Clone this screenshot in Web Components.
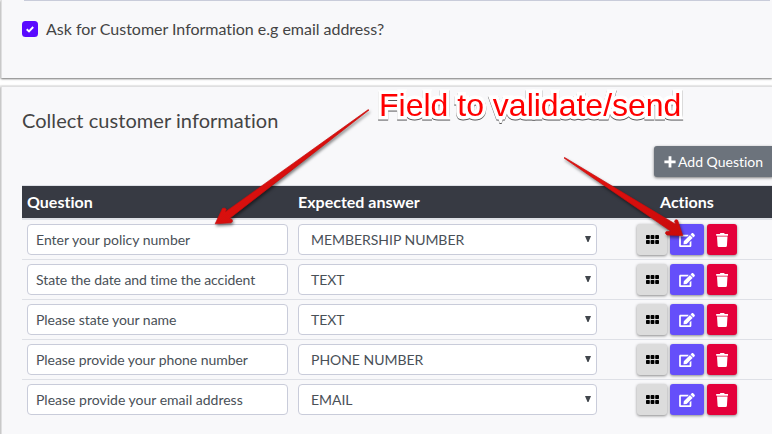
<!DOCTYPE html>
<html lang="en">
<head>
<meta charset="utf-8">
<title>Collect customer information</title>
<style>
html,body{margin:0;height:100%;overflow:hidden;background:#fff}
body{font-family:Lato,"Open Sans",sans-serif;font-size:16px;line-height:24px;color:#444;position:relative;font-variant-ligatures:none}
</style>
</head>
<body>
<survey-page></survey-page>
<script>
const define = (name, html, setup) => customElements.define(name, class extends HTMLElement {
  connectedCallback() {
    if (this.shadowRoot) return;
    const t = document.createElement('template');
    t.innerHTML = html;
    this.attachShadow({mode: 'open'}).append(t.content.cloneNode(true));
    if (setup) setup(this, this.shadowRoot);
  }
});

define('panel-card', `<style>
:host{display:block;flex:none;box-sizing:border-box;background:#f8f8fa;border:1px solid #dfdfe0;border-width:1px 0 0 1px;box-shadow:0 1px 2px rgba(0,0,0,.5),0 0 1px 1px rgba(0,0,0,.06);margin-left:1px;padding-left:20px}
</style><slot></slot>`);

define('check-option', `<style>
:host{display:flex;align-items:center;gap:8px;letter-spacing:-.02px}
svg{display:block;flex:none}
</style><svg width="16" height="16" viewBox="0 0 16 16"><rect width="16" height="16" rx="3.5" fill="#5a0aff"/><path d="M4.700 8.200 7 10.400 11.200 6" fill="none" stroke="#fff" stroke-width="1.900"/></svg><span><slot></slot></span>`);

define('add-button', `<style>
:host{display:flex;flex:none;align-items:center;box-sizing:border-box;width:120px;height:31px;padding-left:10px;gap:2px;background:#6c737c;color:#fff;border-radius:3px;font-size:14px;line-height:21px;white-space:nowrap;box-shadow:0 1px 3px rgba(0,0,0,.5)}
svg{display:block;flex:none}
</style><svg width="12" height="14" viewBox="0 0 12 14"><path d="M6 1.300v11.200M.4 6.900h11.200" stroke="#fff" stroke-width="2.800"/></svg><span><slot></slot></span>`);

define('text-field', `<style>
:host{display:flex;align-items:center;box-sizing:border-box;height:31px;border:1px solid #c9ccda;border-radius:4px;background:#fff;padding:0 8px;font-size:14px;line-height:21px;color:#495057;white-space:nowrap}
</style><span><slot></slot></span>`);

define('select-field', `<style>
:host{display:flex;align-items:center;justify-content:space-between;box-sizing:border-box;height:31px;border:1px solid #c9ccda;border-radius:4px;background:#fff;padding:0 5px 0 12px;font-size:14px;line-height:21px;color:#495057;white-space:nowrap;letter-spacing:-.03px}
svg{display:block;margin-bottom:2px}
</style><span><slot></slot></span><svg width="6" height="6" viewBox="0 0 6 6"><path d="M0 0h6L3.500 6h-1z" fill="#41464c"/></svg>`);

const icons = {
  grid: '<svg width="13" height="9" viewBox="0 0 13 9"><g fill="#000"><rect width="3.800" height="4" rx=".8"/><rect x="4.600" width="3.800" height="4" rx=".8"/><rect x="9.200" width="3.800" height="4" rx=".8"/><rect y="5" width="3.800" height="4" rx=".8"/><rect x="4.600" y="5" width="3.800" height="4" rx=".8"/><rect x="9.200" y="5" width="3.800" height="4" rx=".8"/></g></svg>',
  edit: '<svg width="16" height="14" viewBox="0 0 576 512"><path fill="#fff" d="M402.600 83.200l90.200 90.200c3.800 3.800 3.800 10 0 13.800L274.400 405.600l-92.800 10.300c-12.400 1.400-22.900-9.100-21.500-21.500l10.300-92.800L388.800 83.200c3.800-3.800 10-3.800 13.800 0zm162-22.900l-48.800-48.800c-15.200-15.200-39.900-15.200-55.200 0l-35.400 35.400c-3.800 3.800-3.800 10 0 13.800l90.200 90.200c3.800 3.800 10 3.800 13.800 0l35.400-35.400c15.200-15.300 15.200-40 0-55.200zM384 346.200V448H64V128h229.800c3.200 0 6.200-1.300 8.500-3.500l40-40c7.600-7.600 2.200-20.500-8.500-20.500H48C21.500 64 0 85.500 0 112v352c0 26.500 21.500 48 48 48h352c26.500 0 48-21.500 48-48V306.200c0-10.700-12.900-16-20.500-8.500l-40 40c-2.200 2.300-3.500 5.300-3.500 8.500z"/></svg>',
  trash: '<svg width="12.500" height="14" viewBox="0 0 448 512"><path fill="#fff" d="M432 32H312l-9.400-18.700A24 24 0 0 0 281.100 0H166.800a23.700 23.700 0 0 0-21.400 13.300L136 32H16A16 16 0 0 0 0 48v32a16 16 0 0 0 16 16h416a16 16 0 0 0 16-16V48a16 16 0 0 0-16-16zM53.200 467a48 48 0 0 0 47.900 45h245.800a48 48 0 0 0 47.900-45L416 128H32z"/></svg>'
};
define('icon-button', `<style>
:host{display:flex;flex:none;align-items:center;justify-content:center;box-sizing:border-box;height:31px;border-radius:3px;box-shadow:0 1px 3px rgba(0,0,0,.45)}
:host([kind=grid]){width:30px;background:#dcdcdc}
:host([kind=edit]){width:34px;background:#654ffa}
:host([kind=trash]){width:30px;background:#e4003a}
svg{display:block}
</style>`, (el, root) => root.append(Object.assign(document.createElement('template'), {innerHTML: icons[el.getAttribute('kind')]}).content));

define('question-row', `<style>
:host{display:grid;grid-template-columns:261px 299px 1fr;column-gap:10px;box-sizing:border-box;height:40px;border-top:1px solid #dee0e6;padding:4px 0 0 5px}
.actions{display:flex;gap:3px;margin-left:30px}
</style><text-field><slot></slot></text-field><select-field><slot name="answer"></slot></select-field>
<div class="actions"><icon-button kind="grid"></icon-button><icon-button kind="edit"></icon-button><icon-button kind="trash"></icon-button></div>`);

define('question-table', `<style>
:host{display:block;border-top:1px solid #dee0e6}
.head{display:grid;grid-template-columns:271px 362px 1fr;padding-left:5px;height:32px;line-height:32px;background:#373a43;color:#fff;font-weight:700;border-bottom:1px solid #dee0e6}
</style><div class="head"><span>Question</span><span>Expected answer</span><span>Actions</span></div><slot></slot>`);

define('callout-text', `<style>
:host{position:absolute;left:379px;top:87px;font:32px/36px "Liberation Sans",Arial,sans-serif;color:#f00;white-space:nowrap;letter-spacing:0}
span{-webkit-text-stroke:7px #fff;paint-order:stroke fill;stroke-linejoin:round;filter:drop-shadow(0 1.500px .6px rgba(0,0,0,.65))}
</style><span><slot></slot></span>`);

define('callout-arrows', `<style>
:host{position:absolute;inset:0;pointer-events:none}
svg{display:block;filter:drop-shadow(1px 2px 1.500px rgba(0,0,0,.5))}
</style><svg width="772" height="434" viewBox="0 0 772 434"><defs><linearGradient id="g" x2="1" y2="1"><stop offset="0" stop-color="#e81410"/><stop offset="1" stop-color="#c90b0b"/></linearGradient></defs>
<g fill="url(#g)" stroke="#c80c0c" stroke-width=".7" stroke-linejoin="round"><path d="M369 110 368 109.800 225.500 211.800 226.300 209.500Q225.500 207.300 222.500 208.300L215.200 223.800 231 222.800Q233.500 221.500 231.800 219.300L229.500 218.500z"/><path d="M564 158 564.600 157.500 676 224.500 674.500 221.500Q675 218.800 677.500 220L682.700 235.600 667 235Q664.500 233.500 666 231.700L671 231.300z"/></g></svg>`);

define('survey-page', `<style>
:host{display:flex;flex-direction:column;gap:8px;height:434px;overflow:hidden}
.one{height:78px;border-top:0}
.rule{height:1px;background:#c9ccda;margin-left:2px;margin-right:2px}
check-option{margin-top:16px}
.two{height:360px}
h2{font-size:20px;line-height:24px;font-weight:400;letter-spacing:.05px;margin:21px 0 0}
.bar{display:flex;justify-content:flex-end;margin:14px -2px 8px 0}
.tight{letter-spacing:-.08px}
.snug{letter-spacing:-.05px}
</style>
<panel-card class="one"><div class="rule"></div><check-option>Ask for Customer Information e.g email address?</check-option></panel-card>
<panel-card class="two"><h2>Collect customer information</h2><div class="bar"><add-button>Add Question</add-button></div>
<question-table>
<question-row>Enter your policy number<span slot="answer">MEMBERSHIP NUMBER</span></question-row>
<question-row class="tight">State the date and time the accident<span slot="answer">TEXT</span></question-row>
<question-row class="snug">Please state your name<span slot="answer">TEXT</span></question-row>
<question-row class="snug">Please provide your phone number<span slot="answer">PHONE NUMBER</span></question-row>
<question-row>Please provide your email address<span slot="answer">EMAIL</span></question-row>
</question-table></panel-card>
<callout-arrows></callout-arrows><callout-text>Field to validate/send</callout-text>`);
</script>
</body>
</html>
